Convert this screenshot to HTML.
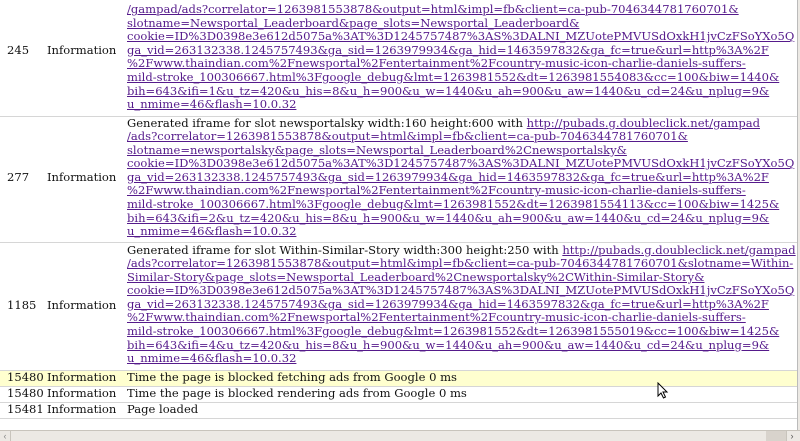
<!DOCTYPE html>
<html><head><style>
html,body{margin:0;padding:0;width:800px;height:441px;overflow:hidden;background:#fff;position:relative}
body{font-family:"DejaVu Serif","Liberation Serif",serif;font-size:11.55px;color:#111}
.b{position:absolute;left:0;width:797px;height:1px;background:#d6d6d6}
.t{position:absolute;white-space:nowrap;line-height:13.6px}
.m{position:absolute;left:127px;width:670px;overflow:hidden;white-space:nowrap;line-height:13.6px}
a{color:#551a8b;text-decoration:underline}
.hl{position:absolute;left:0;top:371px;width:797px;height:15px;background:#ffffcf}
</style></head><body>
<div class="hl"></div>
<div class="b" style="top:116px"></div>
<div class="b" style="top:242px"></div>
<div class="b" style="top:370px"></div>
<div class="b" style="top:386px"></div>
<div class="b" style="top:402px"></div>
<div class="b" style="top:418px"></div>

<div class="t" style="left:7px;top:44px">245</div><div class="t" style="left:47px;top:44px">Information</div>
<div class="m" style="top:3px"><a>/gampad/ads?correlator=1263981553878&amp;output=html&amp;impl=fb&amp;client=ca-pub-7046344781760701&amp;</a><br><a>slotname=Newsportal_Leaderboard&amp;page_slots=Newsportal_Leaderboard&amp;</a><br><a>cookie=ID%3D0398e3e612d5075a%3AT%3D1245757487%3AS%3DALNI_MZUotePMVUSdOxkH1jvCzFSoYXo5Q</a><br><a>ga_vid=263132338.1245757493&amp;ga_sid=1263979934&amp;ga_hid=1463597832&amp;ga_fc=true&amp;url=http%3A%2F</a><br><a>%2Fwww.thaindian.com%2Fnewsportal%2Fentertainment%2Fcountry-music-icon-charlie-daniels-suffers-</a><br><a>mild-stroke_100306667.html%3Fgoogle_debug&amp;lmt=1263981552&amp;dt=1263981554083&amp;cc=100&amp;biw=1440&amp;</a><br><a>bih=643&amp;ifi=1&amp;u_tz=420&amp;u_his=8&amp;u_h=900&amp;u_w=1440&amp;u_ah=900&amp;u_aw=1440&amp;u_cd=24&amp;u_nplug=9&amp;</a><br><a>u_nmime=46&amp;flash=10.0.32</a></div>

<div class="t" style="left:7px;top:171px">277</div><div class="t" style="left:47px;top:171px">Information</div>
<div class="m" style="top:116.5px">Generated iframe for slot newsportalsky width:160 height:600 with <a>http://pubads.g.doubleclick.net/gampad</a><br><a>/ads?correlator=1263981553878&amp;output=html&amp;impl=fb&amp;client=ca-pub-7046344781760701&amp;</a><br><a>slotname=newsportalsky&amp;page_slots=Newsportal_Leaderboard%2Cnewsportalsky&amp;</a><br><a>cookie=ID%3D0398e3e612d5075a%3AT%3D1245757487%3AS%3DALNI_MZUotePMVUSdOxkH1jvCzFSoYXo5Q</a><br><a>ga_vid=263132338.1245757493&amp;ga_sid=1263979934&amp;ga_hid=1463597832&amp;ga_fc=true&amp;url=http%3A%2F</a><br><a>%2Fwww.thaindian.com%2Fnewsportal%2Fentertainment%2Fcountry-music-icon-charlie-daniels-suffers-</a><br><a>mild-stroke_100306667.html%3Fgoogle_debug&amp;lmt=1263981552&amp;dt=1263981554113&amp;cc=100&amp;biw=1425&amp;</a><br><a>bih=643&amp;ifi=2&amp;u_tz=420&amp;u_his=8&amp;u_h=900&amp;u_w=1440&amp;u_ah=900&amp;u_aw=1440&amp;u_cd=24&amp;u_nplug=9&amp;</a><br><a>u_nmime=46&amp;flash=10.0.32</a></div>

<div class="t" style="left:7px;top:299px">1185</div><div class="t" style="left:47px;top:299px">Information</div>
<div class="m" style="top:243.5px">Generated iframe for slot Within-Similar-Story width:300 height:250 with <a>http://pubads.g.doubleclick.net/gampad</a><br><a>/ads?correlator=1263981553878&amp;output=html&amp;impl=fb&amp;client=ca-pub-7046344781760701&amp;slotname=Within-</a><br><a>Similar-Story&amp;page_slots=Newsportal_Leaderboard%2Cnewsportalsky%2CWithin-Similar-Story&amp;</a><br><a>cookie=ID%3D0398e3e612d5075a%3AT%3D1245757487%3AS%3DALNI_MZUotePMVUSdOxkH1jvCzFSoYXo5Q</a><br><a>ga_vid=263132338.1245757493&amp;ga_sid=1263979934&amp;ga_hid=1463597832&amp;ga_fc=true&amp;url=http%3A%2F</a><br><a>%2Fwww.thaindian.com%2Fnewsportal%2Fentertainment%2Fcountry-music-icon-charlie-daniels-suffers-</a><br><a>mild-stroke_100306667.html%3Fgoogle_debug&amp;lmt=1263981552&amp;dt=1263981555019&amp;cc=100&amp;biw=1425&amp;</a><br><a>bih=643&amp;ifi=4&amp;u_tz=420&amp;u_his=8&amp;u_h=900&amp;u_w=1440&amp;u_ah=900&amp;u_aw=1440&amp;u_cd=24&amp;u_nplug=9&amp;</a><br><a>u_nmime=46&amp;flash=10.0.32</a></div>

<div class="t" style="left:7px;top:371px">15480</div><div class="t" style="left:47px;top:371px">Information</div><div class="t" style="left:127px;top:371px">Time the page is blocked fetching ads from Google 0 ms</div>
<div class="t" style="left:7px;top:387px">15480</div><div class="t" style="left:47px;top:387px">Information</div><div class="t" style="left:127px;top:387px">Time the page is blocked rendering ads from Google 0 ms</div>
<div class="t" style="left:7px;top:403px">15481</div><div class="t" style="left:47px;top:403px">Information</div><div class="t" style="left:127px;top:403px">Page loaded</div>

<div style="position:absolute;left:797px;top:0;width:3px;height:430px;background:#ece9e4;border-left:1px solid #bbb"></div>
<div style="position:absolute;left:0;top:430px;width:800px;height:11px;background:#ece9e4;border-top:1px solid #c8c4bc"></div>
<div style="position:absolute;left:0;top:431px;width:10px;height:10px;border-right:1px solid #c8c4bc;color:#888;font:9px sans-serif;text-align:center;line-height:10px">&lsaquo;</div>
<div style="position:absolute;left:766px;top:431px;width:20px;height:10px;background:#d8d3cc"></div>
<div style="position:absolute;left:786px;top:431px;width:10px;height:10px;border-left:1px solid #c8c4bc;color:#555;font:9px sans-serif;text-align:center;line-height:10px">&rsaquo;</div>
<svg style="position:absolute;left:657px;top:382px" width="12" height="18" viewBox="0 0 12 18"><path d="M1 1 L1 14 L4 11 L6.5 16 L8.5 15 L6 10 L10 10 Z" fill="#fff" stroke="#000" stroke-width="1"/></svg>
</body></html>
